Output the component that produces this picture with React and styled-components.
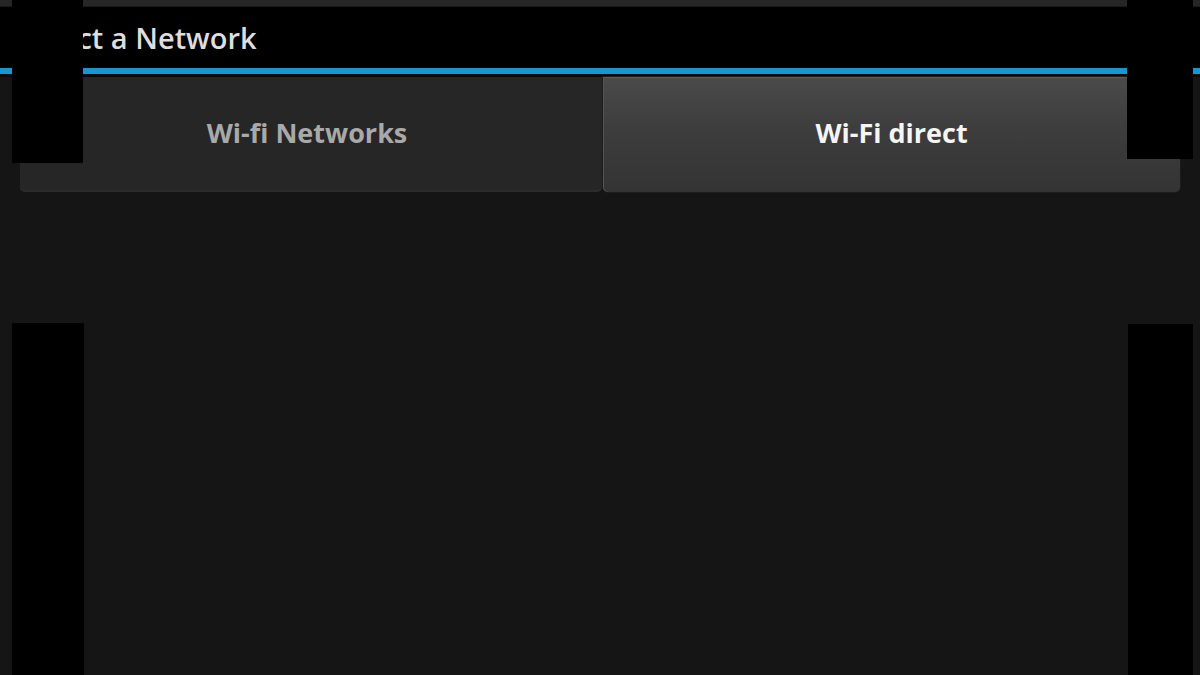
import styled, { createGlobalStyle } from 'styled-components';

const GlobalStyle = createGlobalStyle`
  html, body {
    margin: 0;
    padding: 0;
    background: #151515;
  }
  * {
    box-sizing: border-box;
  }
`;

const Screen = styled.div`
  position: relative;
  width: 1200px;
  height: 675px;
  overflow: hidden;
  background: #151515;
  font-family: "Open Sans", "Noto Sans", sans-serif;
  display: flex;
  flex-direction: column;
`;

const TopStrip = styled.div`
  height: 7px;
  background: #262626;
  border-bottom: 1px solid #1a1a1a;
`;

const Header = styled.header`
  height: 61px;
  background: #000;
  display: flex;
  align-items: center;
  padding-left: 20px;
`;

const Title = styled.h1`
  margin: 0;
  font-size: 29px;
  font-weight: 600;
  color: #dedede;
`;

const BlueBar = styled.div`
  height: 6px;
  background: #1597d1;
`;

const Divider = styled.div`
  height: 3px;
  background: #0a0a0a;
`;

const Tabs = styled.nav`
  display: flex;
  gap: 1px;
  margin: 0 20px;
  height: 115px;
`;

const Tab = styled.div`
  flex: ${p => (p.$active ? '1' : '0 0 582px')};
  display: flex;
  align-items: center;
  justify-content: center;
  padding: 0 ${p => (p.$active ? '0' : '8px')} 4px 0;
  font-size: 27px;
  font-weight: 700;
  letter-spacing: 0;
  border-radius: 0 0 5px 5px;
  color: ${p => (p.$active ? '#f5f5f5' : '#a9a9a9')};
  background: ${p =>
    p.$active
      ? 'linear-gradient(#4a4a4a, #3d3d3d 45%, #343434)'
      : '#262626'};
  box-shadow: ${p =>
    p.$active
      ? 'inset 0 1px 0 #5c5c5c, inset 1px 0 0 #555, 0 0 0 1px #1c1c1c'
      : 'inset 0 -2px 0 #2c2c2c'};
`;

const Mask = styled.div`
  position: absolute;
  background: #000;
  left: ${p => p.$left}px;
  top: ${p => p.$top}px;
  width: ${p => p.$width}px;
  height: ${p => p.$height}px;
`;

export default function App() {
  return (
    <>
      <GlobalStyle />
      <Screen>
        <TopStrip />
        <Header>
          <Title>Select a Network</Title>
        </Header>
        <BlueBar />
        <Divider />
        <Tabs>
          <Tab>Wi-fi Networks</Tab>
          <Tab $active>Wi-Fi direct</Tab>
        </Tabs>

        <Mask $left={12} $top={0} $width={71} $height={163} />
        <Mask $left={1127} $top={0} $width={66} $height={159} />
        <Mask $left={12} $top={323} $width={72} $height={352} />
        <Mask $left={1128} $top={324} $width={65} $height={351} />
      </Screen>
    </>
  );
}
